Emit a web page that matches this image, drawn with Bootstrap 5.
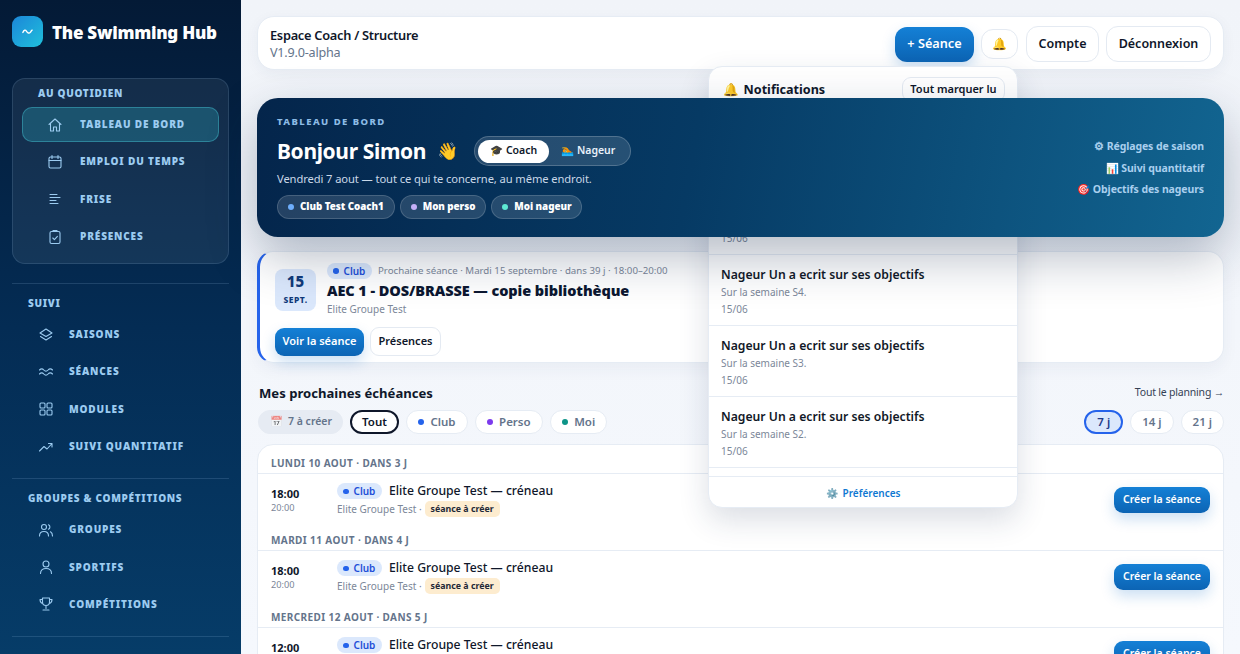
<!DOCTYPE html>
<html lang="fr">
<head>
    <meta charset="UTF-8">
    <meta name="viewport" content="width=device-width, initial-scale=1">
    <title>The Swimming Hub</title>
    <link href="https://cdn.jsdelivr.net/npm/bootstrap@5.3.3/dist/css/bootstrap.min.css" rel="stylesheet">
    <style>
        body { font-family: "Noto Sans", "Open Sans", sans-serif; height: 654px; overflow: hidden; background: #f1f5fa; color: #0f172a; }
        .appshell { height: 654px; overflow: hidden; }
        /* barre laterale */
        .sidebar { width: 241px; flex: none; height: 654px; overflow: hidden; background: linear-gradient(180deg, #041a36 0%, #042c54 50%, #063c68 100%); color: #9ccbf0; }
        .brandrow { height: 78px; padding: 0 12px 15px; gap: 9px; }
        .brandlogo { width: 31px; height: 31px; border-radius: 9px; background: linear-gradient(135deg, #1c86d8, #1fc0dc); flex: none; }
        .brandname { font-size: 17px; font-weight: 900; color: #fff; letter-spacing: -.25px; white-space: nowrap; padding-top: 2px; }
        .navbox { margin: 0 12px; height: 186px; padding: 7px 9px; border: 1px solid rgba(148,190,230,.16); border-radius: 13px; background: rgba(255,255,255,.065); }
        .navlabel { font-size: 10px; font-weight: 900; letter-spacing: .7px; line-height: 14px; color: #9ccbf0; text-transform: uppercase; white-space: nowrap; }
        .navbox .navlabel { padding: 0 16px 7px; }
        .navitem { display: flex; align-items: center; height: 35.3px; margin-bottom: 2px; padding-left: 24px; gap: 17px; font-size: 10px; font-weight: 900; letter-spacing: .85px; color: #9ccbf0; text-transform: uppercase; text-decoration: none; border: 1px solid transparent; border-radius: 10px; white-space: nowrap; }
        .navitem svg { width: 16px; height: 16px; flex: none; fill: none; stroke: #9ccbf0; stroke-width: 1.1; stroke-linecap: round; stroke-linejoin: round; }
        .navitem.current { background: rgba(46,170,190,.3); border-color: rgba(60,170,190,.55); }
        .navsection { margin: 14px 12px 0; padding-top: 12px; border-top: 1px solid rgba(148,190,230,.18); }
        .navbox + .navsection { margin-top: 19px; }
        .navsection .navlabel { padding: 0 16px 7px; }
        .navsection .navitem { padding-left: 25px; gap: 15px; }
        /* barre du haut */
        .mainpane { flex: 1; min-width: 0; padding: 16px; position: relative; background: linear-gradient(180deg, #f1f4f9, #f5f8fd); }
        .topstrip { height: 54px; padding: 2px 12px 0; background: #fff; border: 1px solid #e6ecf4; border-radius: 17px; box-shadow: 0 4px 14px rgba(30,60,100,.05); margin-bottom: 28px; }
        .toptitle { font-size: 12.8px; font-weight: 600; letter-spacing: -.27px; line-height: 18px; color: #0f172a; }
        .topversion { font-size: 12.6px; letter-spacing: -.2px; line-height: 18px; color: #64748b; }
        .softbtn { background: #fff; border: 1px solid #e4eaf2; border-radius: 12px; font-size: 12.5px; font-weight: 600; color: #0f172a; padding: 0; white-space: nowrap; display: inline-flex; align-items: center; justify-content: center; text-decoration: none; flex: none; }
        .bluebtn { background: linear-gradient(180deg, #1480d6, #0c64b4); border: 0; color: #fff; border-radius: 12px; font-weight: 600; display: inline-flex; align-items: center; justify-content: center; box-shadow: 0 6px 14px rgba(20,110,200,.22); white-space: nowrap; text-decoration: none; flex: none; }
        .seancebtn { width: 79px; height: 35px; font-size: 12.7px; }
        .bellbtn { width: 37px; height: 30px; font-size: 12px; margin-left: 7px; }
        .comptebtn { width: 73px; height: 36px; margin-left: 8px; }
        .decobtn { width: 105px; height: 36px; margin-left: 7px; }
        /* panneau notifications */
        .notifpanel { position: absolute; left: 467px; top: 66px; width: 310px; height: 442px; background: #fff; border: 1px solid #e6ecf4; border-radius: 14px; box-shadow: 0 12px 30px rgba(30,50,90,.16); z-index: 1; overflow: hidden; display: flex; flex-direction: column; }
        .notifhead { height: 45px; flex: none; padding: 10px 12px 0 14px; }
        .notiftitle { font-size: 12.6px; font-weight: 700; word-spacing: -1px; }
        .marklu { height: 25px; width: 103px; font-size: 11px; border-radius: 9px; }
        .notiflist { height: 365px; flex: none; overflow: hidden; border-bottom: 1px solid #e6ecf4; }
        .notifrow { height: 71px; padding: 10px 12px; border-top: 1px solid #e6ecf4; }
        .notifrow b { display: block; font-size: 12.2px; font-weight: 600; line-height: 19px; color: #111827; }
        .notifrow span { display: block; font-size: 10px; line-height: 17px; color: #7c8799; }
        .notiffoot { flex: 1; padding-top: 3px; font-size: 10px; font-weight: 600; color: #1078d2; gap: 5px; }
        /* bandeau */
        .herobox { position: relative; z-index: 2; height: 139px; border-radius: 21px; background: linear-gradient(100deg, #04254b 0%, #063a64 45%, #126591 100%); box-shadow: 0 20px 50px rgba(15,35,70,.3); color: #fff; padding: 17px 20px 0; margin-bottom: 14px; }
        .heroeyebrow { font-size: 9.5px; font-weight: 800; letter-spacing: 1.45px; color: #8dbce6; line-height: 13px; }
        .herotop { height: 30px; margin-top: 8px; }
        .herohello { font-size: 21px; font-weight: 700; letter-spacing: -.35px; line-height: 28px; white-space: nowrap; }
        .herowave { font-size: 17px; margin: 0 16px 0 11px; line-height: 28px; }
        .roleswitch { height: 30px; padding: 3px; border-radius: 15px; border: 1px solid rgba(255,255,255,.2); background: rgba(255,255,255,.13); }
        .roletab { height: 23px; padding: 0 12px; border-radius: 12px; font-size: 10.5px; font-weight: 600; gap: 5px; color: #e8f1fa; }
        .roletab.picked { background: #fff; color: #0f172a; }
        .herodate { font-size: 11.2px; letter-spacing: -.1px; line-height: 18px; color: #c9d8e8; margin-top: 4px; }
        .chiprow { margin-top: 7px; gap: 5px; }
        .herochip { height: 24px; padding: 0 10px 0 10px; border-radius: 12px; border: 1px solid rgba(255,255,255,.16); background: rgba(255,255,255,.13); font-size: 9.8px; font-weight: 900; letter-spacing: -.05px; gap: 6px; white-space: nowrap; }
        .chipdot { width: 6px; height: 6px; border-radius: 50%; flex: none; }
        .herolinks { font-size: 10.5px; font-weight: 700; letter-spacing: -.1px; color: #a9cfee; line-height: 21.5px; text-align: right; padding-top: 21px; }
        /* carte prochaine seance */
        .nextcard { height: 112px; background: #fff; border: 1px solid #e6ecf4; border-left: 3px solid #2563eb; border-radius: 16px; padding: 11px 15px; box-shadow: 0 6px 16px rgba(30,60,100,.05); margin-bottom: 21px; }
        .datetile { width: 41px; height: 42px; margin-top: 6px; flex: none; border-radius: 8px; background: #dbe8fc; color: #103a7a; text-align: center; }
        .datetile b { display: block; font-size: 15px; font-weight: 800; line-height: 20px; padding-top: 2px; }
        .datetile span { display: block; font-size: 8.5px; font-weight: 800; letter-spacing: .5px; line-height: 14px; margin-top: 2px; }
        .clubtag { display: inline-flex; align-items: center; gap: 5px; height: 16px; width: 45px; padding: 0 0 0 6px; border-radius: 8px; background: #dbe8fc; color: #1d4ed8; font-size: 10px; font-weight: 600; flex: none; }
        .clubtag i { width: 5.5px; height: 5.500px; border-radius: 50%; background: #2563eb; flex: none; }
        .nextinfo { margin-left: 3px; }
        .nextmeta { font-size: 9.7px; color: #7c8799; white-space: nowrap; margin-left: -2px; }
        .nexttitle { font-size: 14.5px; font-weight: 900; letter-spacing: -.08px; line-height: 21px; margin-top: 1px; color: #0c1730; white-space: nowrap; }
        .nextgroup { font-size: 10px; color: #7c8799; line-height: 13px; margin-top: 2px; }
        .nextbtns { margin-top: 11px; gap: 6px; }
        .voirbtn { width: 89px; height: 28px; font-size: 11px; border-radius: 9px; }
        .presbtn { width: 71px; height: 29px; font-size: 11px; border-radius: 9px; }
        /* echeances */
        .duehead { font-size: 13.1px; font-weight: 700; line-height: 18px; padding: 0 2px; color: #0f172a; }
        .planlink { font-size: 10.5px; letter-spacing: -.2px; color: #334155; text-decoration: none; }
        .filterrow { margin: 8px 0 10px; }
        .pillbtn { height: 24px; padding: 0 11px; border: 1px solid #e6ecf4; background: #fff; border-radius: 12px; font-size: 11.5px; font-weight: 600; color: #64748b; gap: 6px; display: inline-flex; align-items: center; white-space: nowrap; }
        .pillbtn i { width: 6.5px; height: 6.5px; border-radius: 50%; }
        .pillbtn.tocreate { background: #e6ebf3; border-color: #e6ebf3; color: #64748b; font-size: 10.5px; padding: 0 10px 0 11px; gap: 5px; margin-left: 1px; }
        .tocreate em { font-style: normal; opacity: .6; }
        .pillbtn.onall { border: 2px solid #0f172a; color: #0f172a; padding: 0 10px; }
        .pillbtn.onrange { border: 2px solid #2563eb; background: #dbe8fc; color: #1e3a8a; padding: 0 11px; }
        .rangepill { padding: 0 11px; }
        .pillgap { gap: 7px; }
        .duelist { background: #fff; border: 1px solid #e6ecf4; border-radius: 16px 16px 0 0; overflow: hidden; height: 300px; }
        .dayhead { height: 28.5px; padding: 11px 13px 0; font-size: 10px; font-weight: 700; letter-spacing: .4px; line-height: 14px; color: #64748b; border-bottom: 1.5px solid #e6ecf4; text-transform: uppercase; }
        .duerow { height: 48.5px; padding: 5px 13px 0; }
        .duetime { width: 66px; flex: none; }
        .duetime b { display: block; font-size: 11px; font-weight: 700; line-height: 14px; color: #0f172a; }
        .duetime span { display: block; font-size: 9.2px; line-height: 13px; color: #7c8799; }
        .duename { font-size: 12.2px; font-weight: 500; line-height: 16px; color: #0f172a; white-space: nowrap; margin-left: -1px; }
        .duesub { font-size: 10px; color: #7c8799; margin-top: 2px; line-height: 16px; gap: 3px; }
        .duewarn { font-size: 8.8px; font-weight: 700; height: 16px; padding: 0 6px; border-radius: 5px; background: #fdeccf; color: #1f2937; display: inline-flex; align-items: center; }
        .creerbtn { width: 96px; height: 26px; font-size: 10.5px; border-radius: 9px; }
    </style>
</head>

<body>
    <div class="d-flex appshell">
        <!-- Barre laterale -->
        <aside class="sidebar">
            <div class="d-flex align-items-center brandrow">
                <span class="brandlogo d-flex align-items-center justify-content-center">
                    <svg width="13" height="13" viewBox="0 0 14 14" fill="none" stroke="#fff" stroke-width="1.5" stroke-linecap="round"><path d="M2 8c1.2-3 2.8-3 4-1.2S8.800 9.500 10 8s1-2 2-2.500"/></svg>
                </span>
                <span class="brandname">The Swimming Hub</span>
            </div>

            <div class="navbox">
                <div class="navlabel">Au quotidien</div>
                <a class="navitem current" href="#"><svg viewBox="0 0 16 16"><path d="M2 7.500 8 2l6 5.500M3.500 6.500V14h3v-4h3v4h3V6.500"/></svg>Tableau de bord</a>
                <a class="navitem" href="#"><svg viewBox="0 0 16 16"><rect x="2" y="3" width="12" height="11" rx="1.500"/><path d="M2 6.500h12M5 1.500v3M11 1.500v3"/></svg>Emploi du temps</a>
                <a class="navitem" href="#"><svg viewBox="0 0 16 16"><path d="M3 3.500h7M3 6.500h10M3 9.500h6M3 12.500h8"/></svg>Frise</a>
                <a class="navitem" href="#"><svg viewBox="0 0 16 16"><rect x="3" y="2.500" width="10" height="12" rx="1.500"/><path d="M6 2.500V1.500h4v1M5.800 9l1.600 1.600 3-3.200"/></svg>Présences</a>
            </div>

            <div class="navsection">
                <div class="navlabel">Suivi</div>
                <a class="navitem" href="#"><svg viewBox="0 0 16 16"><path d="M8 2 14 6 8 9.500 2 6ZM2.500 9.500 8 13l5.500-3.500"/></svg>Saisons</a>
                <a class="navitem" href="#"><svg viewBox="0 0 16 16"><path d="M1.500 6c1.500-1.500 3-1.500 4.300 0s3 1.500 4.300 0 3-1.500 4.400 0M1.500 10c1.500-1.500 3-1.500 4.300 0s3 1.500 4.300 0 3-1.500 4.400 0"/></svg>Séances</a>
                <a class="navitem" href="#"><svg viewBox="0 0 16 16"><rect x="2" y="2" width="5" height="5" rx="1"/><rect x="9" y="2" width="5" height="5" rx="1"/><rect x="2" y="9" width="5" height="5" rx="1"/><rect x="9" y="9" width="5" height="5" rx="1"/></svg>Modules</a>
                <a class="navitem" href="#"><svg viewBox="0 0 16 16"><path d="M1.500 12 6 7.500l3 2.500 5-5.500M10.500 4.500H14V8"/></svg>Suivi quantitatif</a>
            </div>

            <div class="navsection">
                <div class="navlabel">Groupes &amp; compétitions</div>
                <a class="navitem" href="#"><svg viewBox="0 0 16 16"><circle cx="6" cy="5" r="2.500"/><path d="M1.500 14c0-3 2-4.500 4.500-4.500s4.500 1.500 4.500 4.500M10.500 2.800a2.500 2.500 0 0 1 0 4.500M12.500 9.800c1.300.7 2 2.200 2 4.200"/></svg>Groupes</a>
                <a class="navitem" href="#"><svg viewBox="0 0 16 16"><circle cx="8" cy="5" r="3"/><path d="M2.500 14.500c0-3.500 2.500-5 5.500-5s5.500 1.500 5.500 5"/></svg>Sportifs</a>
                <a class="navitem" href="#"><svg viewBox="0 0 16 16"><path d="M4.500 2h7v4a3.500 3.500 0 0 1-7 0ZM4.500 3.500H2c0 2.500 1 3.500 2.800 4M11.500 3.500H14c0 2.500-1 3.500-2.800 4M8 9.500v3M5 14h6"/></svg>Compétitions</a>
            </div>

            <div class="navsection"></div>
        </aside>

        <main class="mainpane">
            <!-- Barre du haut -->
            <div class="topstrip d-flex align-items-center justify-content-between">
                <div>
                    <div class="toptitle">Espace Coach / Structure</div>
                    <div class="topversion">V1.9.0-alpha</div>
                </div>
                <div class="d-flex align-items-center">
                    <a class="bluebtn seancebtn" href="#">+ Séance</a>
                    <a class="softbtn bellbtn" href="#">🔔</a>
                    <a class="softbtn comptebtn" href="#">Compte</a>
                    <a class="softbtn decobtn" href="#">Déconnexion</a>
                </div>
            </div>

            <!-- Notifications -->
            <div class="notifpanel">
                <div class="notifhead d-flex align-items-start justify-content-between">
                    <span class="notiftitle mt-1">🔔 &nbsp;Notifications</span>
                    <a class="softbtn marklu" href="#">Tout marquer lu</a>
                </div>
                <div class="notiflist" id="notifList"></div>
                <div class="notiffoot d-flex align-items-center justify-content-center"><span>⚙️</span><span>Préférences</span></div>
            </div>

            <!-- Bandeau -->
            <section class="herobox d-flex justify-content-between">
                <div>
                    <div class="heroeyebrow">TABLEAU DE BORD</div>
                    <div class="herotop d-flex align-items-center">
                        <span class="herohello">Bonjour Simon</span>
                        <span class="herowave">👋</span>
                        <div class="roleswitch d-flex align-items-center">
                            <span class="roletab picked d-flex align-items-center">🎓 Coach</span>
                            <span class="roletab d-flex align-items-center">🏊 Nageur</span>
                        </div>
                    </div>
                    <div class="herodate">Vendredi 7 aout — tout ce qui te concerne, au même endroit.</div>
                    <div class="chiprow d-flex">
                        <span class="herochip d-flex align-items-center"><span class="chipdot" style="background:#6eaefc"></span>Club Test Coach1</span>
                        <span class="herochip d-flex align-items-center"><span class="chipdot" style="background:#c4b0f8"></span>Mon perso</span>
                        <span class="herochip d-flex align-items-center"><span class="chipdot" style="background:#5eead4"></span>Moi nageur</span>
                    </div>
                </div>
                <div class="herolinks">
                    <div>⚙ Réglages de saison</div>
                    <div>📊 Suivi quantitatif</div>
                    <div>🎯 Objectifs des nageurs</div>
                </div>
            </section>

            <!-- Prochaine seance -->
            <section class="nextcard">
                <div class="d-flex gap-2">
                    <div class="datetile"><b>15</b><span>SEPT.</span></div>
                    <div class="nextinfo">
                        <div class="d-flex align-items-center gap-2">
                            <span class="clubtag"><i></i>Club</span>
                            <span class="nextmeta">Prochaine séance · Mardi 15 septembre · dans 39 j · 18:00–20:00</span>
                        </div>
                        <div class="nexttitle">AEC 1 - DOS/BRASSE — copie bibliothèque</div>
                        <div class="nextgroup">Elite Groupe Test</div>
                    </div>
                </div>
                <div class="nextbtns d-flex align-items-center">
                    <a class="bluebtn voirbtn" href="#">Voir la séance</a>
                    <a class="softbtn presbtn" href="#">Présences</a>
                </div>
            </section>

            <!-- Echeances -->
            <div class="d-flex justify-content-between align-items-center">
                <span class="duehead">Mes prochaines échéances</span>
                <a class="planlink" href="#">Tout le planning →</a>
            </div>
            <div class="filterrow d-flex justify-content-between align-items-center">
                <div class="d-flex pillgap align-items-center">
                    <span class="pillbtn tocreate"><em>📅</em> 7 à créer</span>
                    <span class="pillbtn onall">Tout</span>
                    <span class="pillbtn"><i style="background:#2563eb"></i>Club</span>
                    <span class="pillbtn"><i style="background:#7c3aed"></i>Perso</span>
                    <span class="pillbtn"><i style="background:#0d9488"></i>Moi</span>
                </div>
                <div class="d-flex pillgap align-items-center">
                    <span class="pillbtn onrange">7 j</span>
                    <span class="pillbtn rangepill">14 j</span>
                    <span class="pillbtn rangepill">21 j</span>
                </div>
            </div>
            <div class="duelist" id="dueList"></div>
        </main>
    </div>

    <script>
        // notifications (la derniere ligne est coupee, on ne voit que son haut)
        const semaines = ["S6", "S5", "S4", "S3", "S2"];
        document.getElementById("notifList").innerHTML = semaines.map(s => `
            <div class="notifrow">
                <b>Nageur Un a ecrit sur ses objectifs</b>
                <span>Sur la semaine ${s}.</span>
                <span>15/06</span>
            </div>`).join("") + `<div class="notifrow"></div>`;

        // echeances
        const jours = [
            { jour: "Lundi 10 aout · dans 3 j", debut: "18:00", fin: "20:00" },
            { jour: "Mardi 11 aout · dans 4 j", debut: "18:00", fin: "20:00" },
            { jour: "Mercredi 12 aout · dans 5 j", debut: "12:00", fin: "14:00" }
        ];
        document.getElementById("dueList").innerHTML = jours.map(j => `
            <div class="dayhead">${j.jour}</div>
            <div class="duerow d-flex align-items-center justify-content-between">
                <div class="d-flex align-items-center">
                    <div class="duetime"><b>${j.debut}</b><span>${j.fin}</span></div>
                    <div>
                        <div class="d-flex align-items-center gap-2">
                            <span class="clubtag"><i></i>Club</span>
                            <span class="duename">Elite Groupe Test — créneau</span>
                        </div>
                        <div class="duesub d-flex align-items-center">Elite Groupe Test · <span class="duewarn">séance à créer</span></div>
                    </div>
                </div>
                <a class="bluebtn creerbtn" href="#">Créer la séance</a>
            </div>`).join("");
    </script>

    <script src="https://cdn.jsdelivr.net/npm/bootstrap@5.3.3/dist/js/bootstrap.bundle.min.js"></script>
</body>
</html>
